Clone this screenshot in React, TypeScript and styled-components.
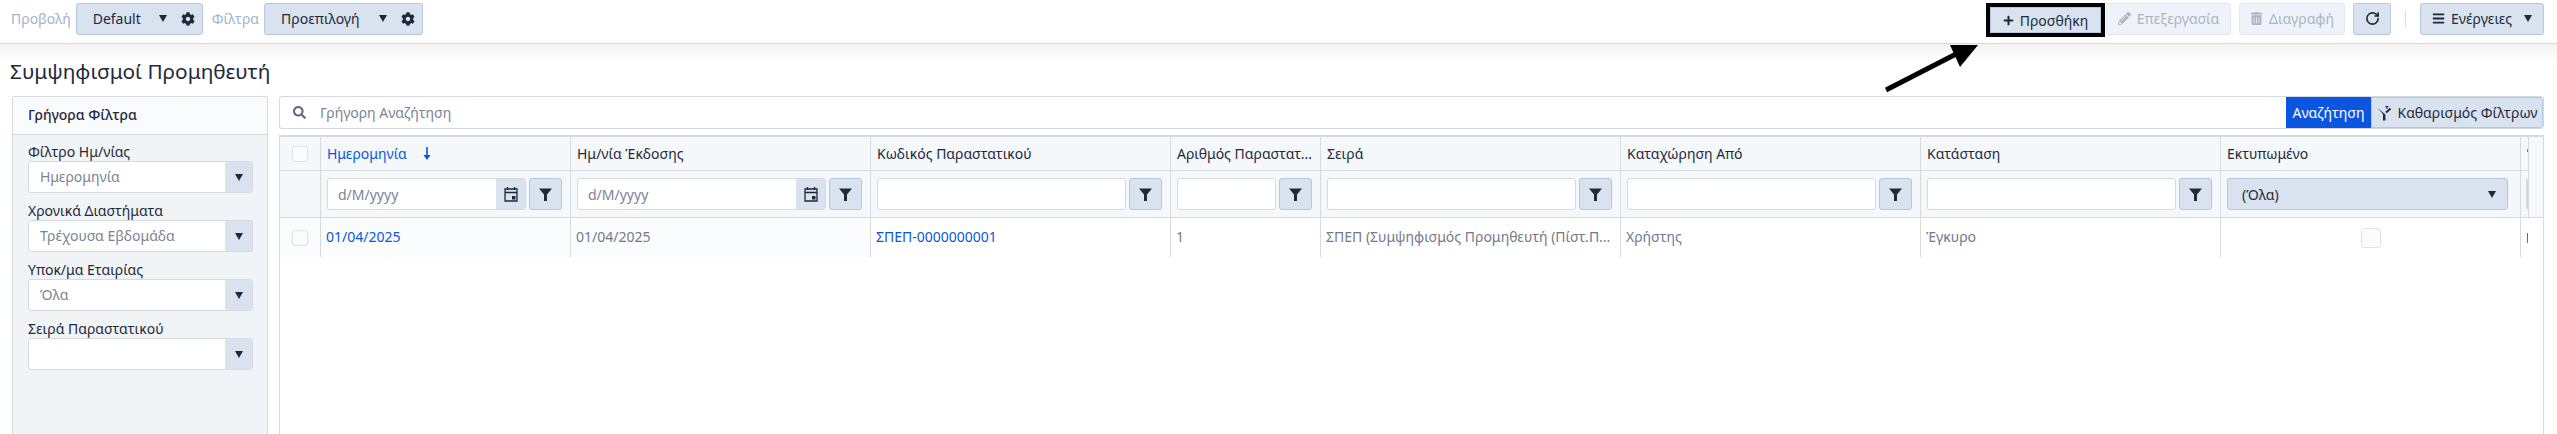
import React from "react";
import styled, { createGlobalStyle } from "styled-components";
import { FaCog, FaSearch, FaPencilAlt, FaTrashAlt, FaPlus, FaBars } from "react-icons/fa";
import { RotateCw } from "lucide-react";

const GlobalStyle = createGlobalStyle`
    html, body {
        margin: 0;
        padding: 0;
        background: #fff;
    }
    * {
        box-sizing: border-box;
    }
    body {
        font-family: "Noto Sans", "Open Sans", sans-serif;
        font-size: 14px;
        color: #1e293b;
    }
`;

const Page = styled.div`
    position: relative;
    width: 2557px;
    height: 434px;
    overflow: hidden;
`;

const Toolbar = styled.div`
    display: flex;
    align-items: center;
    justify-content: space-between;
    height: 44px;
    padding: 0 13px 6px 11px;
    border-bottom: 1px solid #d6d6d6;
`;

const ToolbarGroup = styled.div`
    display: flex;
    align-items: center;
`;

const ToolbarLabel = styled.span`
    color: #a3b3cc;
    margin-right: 5px;
`;

const ViewSelect = styled.div<{ $width: number }>`
    display: flex;
    align-items: center;
    width: ${p => p.$width}px;
    height: 32px;
    padding: 0 7px 0 16px;
    margin-right: 9px;
    background: #d9e3f0;
    border: 1px solid #b4c6e0;
    border-radius: 3px;
`;

const SelectText = styled.span`
    flex: 1;
`;

const Caret = styled.span<{ $gap?: number }>`
    display: inline-block;
    width: 0;
    height: 0;
    margin-left: ${p => p.$gap ?? 0}px;
    border-left: 4px solid transparent;
    border-right: 4px solid transparent;
    border-top: 7px solid #1e293b;
`;

const GearSlot = styled.span`
    display: flex;
    margin-left: 14px;
    font-size: 14px;
`;

const ActionButton = styled.div<{ $disabled?: boolean; $width: number; $gap?: number }>`
    display: flex;
    align-items: center;
    justify-content: center;
    gap: 6px;
    width: ${p => p.$width}px;
    height: 32px;
    margin-left: ${p => p.$gap ?? 0}px;
    background: ${p => (p.$disabled ? "#eff3f9" : "#d9e3f0")};
    color: ${p => (p.$disabled ? "#a9b4c4" : "#1e293b")};
    border: 1px solid ${p => (p.$disabled ? "#e0e7f1" : "#b4c6e0")};
    border-radius: 3px;
    white-space: nowrap;
`;

const AddButton = styled(ActionButton)`
    height: 34px;
    margin-top: 3px;
    margin-right: 1px;
    border: 4px solid #000;
    border-radius: 0;
    box-shadow: inset 0 0 0 1px #b4c6e0;
`;

const ToolbarDivider = styled.span`
    width: 1px;
    height: 17px;
    margin: 0 14px 0 14px;
    background: #d5dee9;
`;

const TitleBand = styled.div`
    height: 52px;
    padding: 12px 0 0 10px;
    background: linear-gradient(#f3f3f3 0, #fff 18px);
`;

const Title = styled.h1`
    margin: 0;
    font-size: 20.8px;
    font-weight: 400;
    line-height: 30px;
`;

const Content = styled.div`
    display: flex;
    gap: 11px;
    padding: 0 13px 0 12px;
`;

const Sidebar = styled.aside`
    width: 256px;
    height: 340px;
    flex: none;
    background: #f1f4f6;
    border: 1px solid #d6d9dd;
    border-bottom: none;
    border-radius: 3px 3px 0 0;
`;

const SidebarHeader = styled.div`
    height: 38px;
    padding: 0 15px;
    line-height: 36px;
    font-weight: 500;
    background: #f9fbfd;
    border-bottom: 1px solid #d6d9dd;
`;

const SidebarBody = styled.div`
    display: flex;
    flex-direction: column;
    gap: 8px;
    padding: 7px 14px 0 15px;
`;

const Field = styled.div`
    display: flex;
    flex-direction: column;
`;

const FieldLabel = styled.label`
    line-height: 19px;
    height: 19px;
`;

const Combo = styled.div`
    display: flex;
    height: 32px;
    background: #fff;
    border: 1px solid #d6d9dd;
    border-radius: 3px;
    overflow: hidden;
`;

const ComboText = styled.span`
    flex: 1;
    padding-left: 11px;
    line-height: 30px;
    color: #7a8594;
`;

const ComboButton = styled.span`
    display: flex;
    align-items: center;
    justify-content: center;
    width: 27px;
    background: #d9e3f0;
`;

const Main = styled.div`
    display: flex;
    flex-direction: column;
    flex: 1;
    gap: 6px;
`;

const SearchBar = styled.div`
    display: flex;
    height: 33px;
    background: #fff;
    border: 1px solid #d6d9dd;
    border-radius: 3px;
`;

const SearchInput = styled.div`
    display: flex;
    flex: 1;
    align-items: center;
    gap: 14px;
    padding-left: 13px;
    color: #7a8594;
`;

const SearchGlyph = styled.span`
    display: flex;
    color: #5b6b80;
    font-size: 13px;
`;

const SearchButton = styled.div`
    display: flex;
    align-items: center;
    width: 85px;
    justify-content: center;
    background: #0a56e0;
    color: #fff;
`;

const ClearButton = styled.div`
    display: flex;
    align-items: center;
    justify-content: center;
    gap: 4px;
    width: 172px;
    background: #d9e3f0;
    border: 1px solid #b4c6e0;
    border-radius: 0 3px 3px 0;
    white-space: nowrap;
`;

const Table = styled.div`
    display: grid;
    grid-template-columns: 41px 250px 300px 300px 150px 300px 300px 300px 300px 8px 1fr;
    grid-template-rows: 34px 47px 39px;
    height: 300px;
    align-content: start;
    border: 1px solid #d6d9dd;
    border-top-width: 2px;
    border-bottom: none;
`;

const HeaderCell = styled.div<{ $active?: boolean }>`
    display: flex;
    align-items: center;
    gap: 16px;
    padding: 0 6px;
    overflow: hidden;
    white-space: nowrap;
    background: #f4f8fb;
    border-right: 1px solid #d6d9dd;
    border-bottom: 1px solid #d6d9dd;
    color: ${p => (p.$active ? "#0a56e0" : "#1e293b")};
`;

const FilterCell = styled.div`
    display: flex;
    align-items: center;
    gap: 3px;
    padding: 0 8px 0 6px;
    overflow: hidden;
    background: #f4f8fb;
    border-right: 1px solid #d6d9dd;
    border-bottom: 1px solid #d6d9dd;
`;

const CheckCell = styled.div`
    display: flex;
    align-items: center;
    justify-content: center;
    border-right: 1px solid #d6d9dd;
    background: #fbfcfd;
`;

const HeadCheckCell = styled(FilterCell)`
    justify-content: center;
    padding: 0;
`;

const DataCell = styled.div<{ $link?: boolean; $first?: boolean }>`
    padding: 0 5px;
    line-height: 38px;
    overflow: hidden;
    white-space: nowrap;
    text-overflow: ellipsis;
    border-right: 1px solid #d6d9dd;
    background: ${p => (p.$first ? "#fbfcfd" : "#fff")};
    color: ${p => (p.$link ? "#0a56e0" : "#6f7b8b")};
`;

const CenterCell = styled(DataCell)`
    display: flex;
    align-items: center;
    justify-content: center;
`;

const CheckBox = styled.span<{ $size: number }>`
    display: block;
    width: ${p => p.$size}px;
    height: ${p => p.$size}px;
    background: #fbfcfd;
    border: 1px solid #dfe3e8;
    border-radius: 3px;
`;

const FilterInput = styled.div`
    display: flex;
    align-items: center;
    flex: 1;
    min-width: 0;
    height: 32px;
    padding-left: 10px;
    background: #fff;
    border: 1px solid #d6d9dd;
    border-radius: 3px;
    color: #7a8594;
    overflow: hidden;
`;

const DateText = styled.span`
    flex: 1;
`;

const CalendarButton = styled.span`
    display: flex;
    align-items: center;
    justify-content: center;
    width: 29px;
    height: 100%;
    background: #d9e3f0;
`;

const FilterButton = styled.span`
    display: flex;
    flex: none;
    align-items: center;
    justify-content: center;
    width: 33px;
    height: 32px;
    background: #d9e3f0;
    border: 1px solid #b4c6e0;
    border-radius: 3px;
`;

const AllSelect = styled.div`
    display: flex;
    align-items: center;
    justify-content: space-between;
    width: 281px;
    height: 32px;
    padding: 0 11px 0 14px;
    background: #d9e3f0;
    border: 1px solid #b4c6e0;
    border-radius: 3px;
`;

const ClippedHeader = styled.div`
    display: flex;
    align-items: center;
    justify-content: flex-end;
    padding-bottom: 7px;
    background: #f4f8fb;
    border-right: 1px solid #d6d9dd;
    border-bottom: 1px solid #d6d9dd;
`;

const RedTick = styled.span`
    width: 1px;
    height: 3px;
    background: #c9683c;
`;

const ClippedFilter = styled(ClippedHeader)`
    padding-bottom: 0;
`;

const GreyBar = styled.span`
    width: 2px;
    height: 30px;
    background: #d6d9dd;
`;

const FrozenGutter = styled.div`
    grid-column: 11;
    grid-row: 1 / span 2;
    background: #f4f8fb;
    border-bottom: 1px solid #d6d9dd;
`;

const TailData = styled.div`
    grid-column: 10 / span 2;
    display: flex;
    align-items: center;
    padding-left: 6px;
`;

const PurpleBar = styled.span`
    width: 1px;
    height: 10px;
    background: #6a5fa8;
`;

const ArrowOverlay = styled.svg`
    position: absolute;
    left: 1880px;
    top: 40px;
    width: 105px;
    height: 56px;
`;

const CalendarIcon = () => (
    <svg width="14" height="16" viewBox="0 0 14 16">
        <path d="M1 3h12v12H1z M1 6.5h12" fill="none" stroke="#1e293b" strokeWidth="1.3" />
        <path d="M3.5 1v3M10.5 1v3" stroke="#1e293b" strokeWidth="1.4" />
        <rect x="8" y="10" width="3.5" height="3.5" fill="#1e293b" />
    </svg>
);

const FunnelIcon = () => (
    <svg width="15" height="15" viewBox="0 0 15 15">
        <path d="M1 1.5h13L9 7.5V14H6V7.5z" fill="#1e293b" />
    </svg>
);

const ClearFilterIcon = () => (
    <svg width="17" height="16" viewBox="0 0 17 16">
        <path d="M1 2.5l6 6.5v6.5h2.4V9.5z" fill="#1e293b" />
        <path d="M10 7.5l4.5-4" stroke="#1e293b" strokeWidth="2" fill="none" />
        <path d="M9.5 1l2.2 2.4M12.2 1L9.8 3.4" stroke="#1e293b" strokeWidth="1.1" fill="none" />
    </svg>
);

const SortArrowIcon = () => (
    <svg width="8" height="13" viewBox="0 0 8 13">
        <path d="M4 0v11" stroke="#0a56e0" strokeWidth="1.6" />
        <path d="M0.5 8h7L4 13z" fill="#0a56e0" />
    </svg>
);

const quickFilters = [
    { label: "Φίλτρο Ημ/νίας", value: "Ημερομηνία" },
    { label: "Χρονικά Διαστήματα", value: "Τρέχουσα Εβδομάδα" },
    { label: "Υποκ/μα Εταιρίας", value: "Όλα" },
    { label: "Σειρά Παραστατικού", value: "" },
];

const columns = [
    "Ημ/νία Έκδοσης",
    "Κωδικός Παραστατικού",
    "Αριθμός Παραστατ...",
    "Σειρά",
    "Καταχώρηση Από",
    "Κατάσταση",
    "Εκτυπωμένο",
];

const TextFilter = () => (
    <FilterCell>
        <FilterInput />
        <FilterButton><FunnelIcon /></FilterButton>
    </FilterCell>
);

const DateFilter = () => (
    <FilterCell>
        <FilterInput>
            <DateText>d/M/yyyy</DateText>
            <CalendarButton><CalendarIcon /></CalendarButton>
        </FilterInput>
        <FilterButton><FunnelIcon /></FilterButton>
    </FilterCell>
);

const App = () => {
    return (
        <Page>
            <GlobalStyle />
            <Toolbar>
                <ToolbarGroup>
                    <ToolbarLabel>Προβολή</ToolbarLabel>
                    <ViewSelect $width={127}>
                        <SelectText>Default</SelectText>
                        <Caret />
                        <GearSlot><FaCog /></GearSlot>
                    </ViewSelect>
                    <ToolbarLabel>Φίλτρα</ToolbarLabel>
                    <ViewSelect $width={159}>
                        <SelectText>Προεπιλογή</SelectText>
                        <Caret />
                        <GearSlot><FaCog /></GearSlot>
                    </ViewSelect>
                </ToolbarGroup>
                <ToolbarGroup>
                    <AddButton $width={119}><FaPlus size={11} />Προσθήκη</AddButton>
                    <ActionButton $disabled $width={125}><FaPencilAlt size={13} />Επεξεργασία</ActionButton>
                    <ActionButton $disabled $width={106} $gap={8}><FaTrashAlt size={13} />Διαγραφή</ActionButton>
                    <ActionButton $width={38} $gap={8}><RotateCw size={15} strokeWidth={2.6} /></ActionButton>
                    <ToolbarDivider />
                    <ActionButton $width={124}><FaBars size={13} />Ενέργειες <Caret $gap={6} /></ActionButton>
                </ToolbarGroup>
            </Toolbar>
            <TitleBand>
                <Title>Συμψηφισμοί Προμηθευτή</Title>
            </TitleBand>
            <Content>
                <Sidebar>
                    <SidebarHeader>Γρήγορα Φίλτρα</SidebarHeader>
                    <SidebarBody>
                        {quickFilters.map(item =>
                            <Field key={item.label}>
                                <FieldLabel>{item.label}</FieldLabel>
                                <Combo>
                                    <ComboText>{item.value}</ComboText>
                                    <ComboButton><Caret /></ComboButton>
                                </Combo>
                            </Field>
                        )}
                    </SidebarBody>
                </Sidebar>
                <Main>
                    <SearchBar>
                        <SearchInput>
                            <SearchGlyph><FaSearch /></SearchGlyph>
                            Γρήγορη Αναζήτηση
                        </SearchInput>
                        <SearchButton>Αναζήτηση</SearchButton>
                        <ClearButton><ClearFilterIcon />Καθαρισμός Φίλτρων</ClearButton>
                    </SearchBar>
                    <Table>
                        <HeadCheckCell><CheckBox $size={16} /></HeadCheckCell>
                        <HeaderCell $active>Ημερομηνία <SortArrowIcon /></HeaderCell>
                        {columns.map(name => <HeaderCell key={name}>{name}</HeaderCell>)}
                        <ClippedHeader><RedTick /></ClippedHeader>
                        <FrozenGutter />

                        <HeadCheckCell />
                        <DateFilter />
                        <DateFilter />
                        <TextFilter />
                        <TextFilter />
                        <TextFilter />
                        <TextFilter />
                        <TextFilter />
                        <FilterCell>
                            <AllSelect>(Όλα)<Caret /></AllSelect>
                        </FilterCell>
                        <ClippedFilter><GreyBar /></ClippedFilter>

                        <CheckCell><CheckBox $size={16} /></CheckCell>
                        <DataCell $link $first>01/04/2025</DataCell>
                        <DataCell $first>01/04/2025</DataCell>
                        <DataCell $link>ΣΠΕΠ-0000000001</DataCell>
                        <DataCell>1</DataCell>
                        <DataCell>ΣΠΕΠ (Συμψηφισμός Προμηθευτή (Πίστ.Π...</DataCell>
                        <DataCell>Χρήστης</DataCell>
                        <DataCell>Έγκυρο</DataCell>
                        <CenterCell><CheckBox $size={20} /></CenterCell>
                        <TailData><PurpleBar /></TailData>
                    </Table>
                </Main>
            </Content>
            <ArrowOverlay viewBox="0 0 105 56">
                <path d="M6 50 L80 12" stroke="#000" strokeWidth="5" fill="none" />
                <path d="M70 5 H98 L80 27 z" fill="#000" />
            </ArrowOverlay>
        </Page>
    );
};

export default App;
